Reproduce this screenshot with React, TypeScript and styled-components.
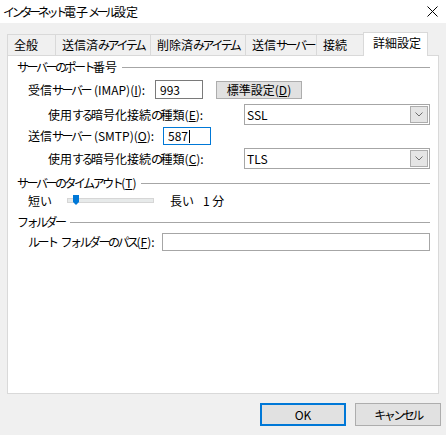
import React from "react";
import styled, { createGlobalStyle } from "styled-components";

const Global = createGlobalStyle`
  html, body { margin: 0; padding: 0; background: #f0f0f0; }
  body {
    font-family: "Noto Sans CJK JP", "Noto Sans", sans-serif;
    font-size: 12px;
    color: #000;
  }
  * { box-sizing: border-box; }
`;

const Kana = styled.span<{ $ls: number }>`
  letter-spacing: ${(p) => p.$ls}px;
`;

const Space = styled.span`
  display: inline-block;
  width: 4px;
`;

const SPLIT = /([\u3040-\u30FF\uFF66-\uFF9F]+| )/;
const IS_KANA = /^[\u3040-\u30FF\uFF66-\uFF9F]+$/;

function jp(text: string, ls = -2.5): React.ReactNode[] {
  return text
    .split(SPLIT)
    .filter((s) => s.length > 0)
    .map((s, i) =>
      s === " " ? (
        <Space key={i} />
      ) : IS_KANA.test(s) ? (
        <Kana key={i} $ls={ls}>
          {s}
        </Kana>
      ) : (
        <React.Fragment key={i}>{s}</React.Fragment>
      )
    );
}

const Window = styled.div`
  width: 446px;
  height: 435px;
  display: flex;
  flex-direction: column;
  background: #f0f0f0;
  overflow: hidden;
`;

const TitleBar = styled.div`
  height: 23px;
  background: #fff;
  display: flex;
  align-items: center;
  justify-content: space-between;
  padding: 0 8px 0 3px;
`;

const Title = styled.div`
  font-size: 12px;
  line-height: 16px;
`;

const TabStrip = styled.div`
  height: 23px;
  margin: 9px 0 0 7px;
  display: flex;
  align-items: flex-end;
`;

const Tab = styled.div<{ $w: number; $active?: boolean }>`
  width: ${(p) => p.$w}px;
  height: ${(p) => (p.$active ? 24 : 21)}px;
  margin-right: -1px;
  margin-left: ${(p) => (p.$active ? -1 : 0)}px;
  margin-bottom: ${(p) => (p.$active ? -1 : 0)}px;
  padding: 2px 0 0 ${(p) => (p.$active ? 9 : 6)}px;
  line-height: 16px;
  white-space: nowrap;
  overflow: hidden;
  border: 1px solid #d9d9d9;
  border-bottom: none;
  background: ${(p) => (p.$active ? "#fff" : "#f0f0f0")};
  position: ${(p) => (p.$active ? "relative" : "static")};
  z-index: ${(p) => (p.$active ? 1 : 0)};
`;

const Panel = styled.div`
  margin-left: 7px;
  width: 432px;
  height: 339px;
  background: #fff;
  border: 1px solid #d9d9d9;
  display: flex;
  flex-direction: column;
  padding: 0 8px 0 0;
`;

const GroupHeader = styled.div<{ $top: number }>`
  margin-top: ${(p) => p.$top}px;
  margin-left: 9px;
  height: 16px;
  display: flex;
  align-items: center;
  gap: 5px;
`;

const GroupTitle = styled.span`
  line-height: 16px;
  white-space: nowrap;
`;

const GroupLine = styled.div`
  flex: 1;
  height: 1px;
  background: #a6a6a6;
`;

const FormRow = styled.div<{ $top: number; $indent: number; $h: number }>`
  margin-top: ${(p) => p.$top}px;
  margin-left: ${(p) => p.$indent}px;
  height: ${(p) => p.$h}px;
  display: flex;
  align-items: center;
`;

const Label = styled.span<{ $w: number; $ml?: number }>`
  width: ${(p) => p.$w}px;
  margin-left: ${(p) => p.$ml || 0}px;
  flex: none;
  white-space: nowrap;
  line-height: 16px;
`;

const Acc = styled.span`
  text-decoration: underline;
  text-underline-offset: 1px;
`;

const Field = styled.div<{ $w: number; $h: number; $focused?: boolean; $tone?: string }>`
  width: ${(p) => p.$w}px;
  height: ${(p) => p.$h}px;
  flex: none;
  border: 1px solid ${(p) => (p.$focused ? "#0078d7" : p.$tone || "#7a7a7a")};
  background: #fff;
  padding: 0 0 0 4px;
  display: flex;
  align-items: center;
  line-height: 14px;
`;

const Caret = styled.span`
  display: inline-block;
  width: 1px;
  height: 13px;
  background: #000;
  margin-left: 1px;
`;

const PushButton = styled.div<{ $w: number; $h: number; $default?: boolean; $ml?: number }>`
  width: ${(p) => p.$w}px;
  height: ${(p) => p.$h}px;
  margin-left: ${(p) => p.$ml || 0}px;
  flex: none;
  background: #e1e1e1;
  border: ${(p) => (p.$default ? "2px solid #0078d7" : "1px solid #adadad")};
  display: flex;
  align-items: center;
  justify-content: center;
  line-height: 14px;
  white-space: nowrap;
`;

const Select = styled.div<{ $w: number }>`
  width: ${(p) => p.$w}px;
  height: 21px;
  flex: none;
  border: 1px solid #a6a6a6;
  background: #fff;
  display: flex;
  align-items: center;
  justify-content: space-between;
  padding: 0 1px 0 1px;
`;

const SelectValue = styled.span`
  line-height: 14px;
  padding-left: 1px;
`;

const DropButton = styled.div`
  width: 18px;
  height: 17px;
  border: 1px solid #adadad;
  background: #e5e5e5;
  display: flex;
  align-items: center;
  justify-content: center;
`;

const SliderTrack = styled.div`
  position: relative;
  width: 87px;
  height: 5px;
  flex: none;
  margin-top: -2px;
  background: #e7eaea;
  border: 1px solid #d6d6d6;
`;

const SliderThumb = styled.svg`
  position: absolute;
  left: 5px;
  top: -4px;
`;

const Footer = styled.div`
  margin-top: 9px;
  padding-right: 5px;
  display: flex;
  justify-content: flex-end;
  gap: 9px;
`;

const Chevron = () => (
  <svg width="8" height="5" viewBox="0 0 8 5">
    <polyline points="0.5,0.5 4,4 7.5,0.5" fill="none" stroke="#6d6d6d" strokeWidth="1" />
  </svg>
);

const CloseIcon = () => (
  <svg width="11" height="11" viewBox="0 0 11 11">
    <path d="M0.5 0.5 L10.5 10.5 M10.5 0.5 L0.5 10.5" stroke="#000" strokeWidth="1" fill="none" />
  </svg>
);

const tabs = [
  { label: "全般", w: 49 },
  { label: "送信済みアイテム", w: 96 },
  { label: "削除済みアイテム", w: 96 },
  { label: "送信サーバー", w: 72 },
  { label: "接続", w: 49 },
  { label: "詳細設定", w: 65, active: true },
];

export default function App() {
  return (
    <>
      <Global />
      <Window>
        <TitleBar>
          <Title>{jp("インターネット電子メール設定", -3.3)}</Title>
          <CloseIcon />
        </TitleBar>
        <TabStrip>
          {tabs.map((t) => (
            <Tab key={t.label} $w={t.w} $active={t.active}>
              {jp(t.label)}
            </Tab>
          ))}
        </TabStrip>
        <Panel>
          <GroupHeader $top={3}>
            <GroupTitle>{jp("サーバーのポート番号")}</GroupTitle>
            <GroupLine />
          </GroupHeader>
          <FormRow $top={5} $indent={20} $h={19}>
            <Label $w={127}>
              {jp("受信サーバー (IMAP)(")}
              <Acc>I</Acc>):
            </Label>
            <Field $w={48} $h={19}>993</Field>
            <PushButton $w={86} $h={18} $ml={13}>
              標準設定(<Acc>D</Acc>)
            </PushButton>
          </FormRow>
          <FormRow $top={5} $indent={40} $h={21}>
            <Label $w={196}>
              {jp("使用する暗号化接続の種類(")}
              <Acc>E</Acc>):
            </Label>
            <Select $w={186}>
              <SelectValue>SSL</SelectValue>
              <DropButton>
                <Chevron />
              </DropButton>
            </Select>
          </FormRow>
          <FormRow $top={2} $indent={20} $h={18}>
            <Label $w={135}>
              {jp("送信サーバー (SMTP)(")}
              <Acc>O</Acc>):
            </Label>
            <Field $w={48} $h={18} $focused>
              587
              <Caret />
            </Field>
          </FormRow>
          <FormRow $top={3} $indent={40} $h={21}>
            <Label $w={196}>
              {jp("使用する暗号化接続の種類(")}
              <Acc>C</Acc>):
            </Label>
            <Select $w={186}>
              <SelectValue>TLS</SelectValue>
              <DropButton>
                <Chevron />
              </DropButton>
            </Select>
          </FormRow>
          <GroupHeader $top={6}>
            <GroupTitle>
              {jp("サーバーのタイムアウト(")}
              <Acc>T</Acc>)
            </GroupTitle>
            <GroupLine />
          </GroupHeader>
          <FormRow $top={1} $indent={20} $h={18}>
            <Label $w={39}>{jp("短い")}</Label>
            <SliderTrack>
              <SliderThumb width="6" height="10" viewBox="0 0 6 10">
                <path d="M0 0 H6 V7 L3 10 L0 7 Z" fill="#0078d7" />
              </SliderThumb>
            </SliderTrack>
            <Label $w={33} $ml={16}>
              {jp("長い")}
            </Label>
            <Label $w={40}>1 分</Label>
          </FormRow>
          <GroupHeader $top={4}>
            <GroupTitle>{jp("フォルダー")}</GroupTitle>
            <GroupLine />
          </GroupHeader>
          <FormRow $top={3} $indent={20} $h={18}>
            <Label $w={134}>
              {jp("ルート フォルダーのパス(")}
              <Acc>F</Acc>):
            </Label>
            <Field $w={268} $h={18} $tone="#a6a6a6" />
          </FormRow>
        </Panel>
        <Footer>
          <PushButton $w={86} $h={23} $default>
            OK
          </PushButton>
          <PushButton $w={86} $h={23}>
            {jp("キャンセル")}
          </PushButton>
        </Footer>
      </Window>
    </>
  );
}
